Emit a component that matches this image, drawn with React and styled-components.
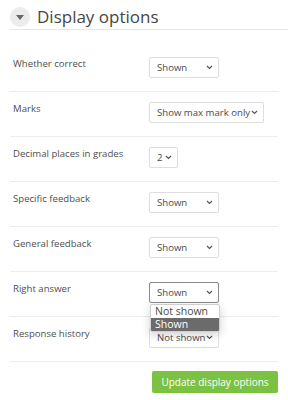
import React from 'react'
import styled, { createGlobalStyle } from 'styled-components'

const GlobalStyle = createGlobalStyle`
    html, body {
        margin: 0;
        padding: 0;
        background: #fff;
        font-family: "Open Sans", "Liberation Sans", sans-serif;
    }
`;

const rows = [
    { label: 'Whether correct', value: 'Shown', width: 70 },
    { label: 'Marks', value: 'Show max mark only', width: 115 },
    { label: 'Decimal places in grades', value: '2', width: 29 },
    { label: 'Specific feedback', value: 'Shown', width: 70 },
    { label: 'General feedback', value: 'Shown', width: 70 },
    { label: 'Right answer', value: 'Shown', width: 70, focused: true, open: ['Not shown', 'Shown'] },
    { label: 'Response history', value: 'Not shown', width: 70 },
]

const Chevron = () => (
    <svg width="7" height="5" viewBox="0 0 7 5">
        <path d="M1 1l2.5 2.5L6 1" fill="none" stroke="#555" strokeWidth="1.2" />
    </svg>
)

const App = () => {
    return (
        <>
            <GlobalStyle />
            <Panel>
                <Header>
                    <Toggle>
                        <svg width="8" height="5" viewBox="0 0 8 5">
                            <path d="M0 0h8L4 5z" fill="#666" />
                        </svg>
                    </Toggle>
                    <Title>Display options</Title>
                </Header>
                <Rows>
                    {rows.map((r) => (
                        <Row key={r.label}>
                            <Label>{r.label}</Label>
                            <SelectWrap>
                                <Select $w={r.width} $focused={r.focused}>
                                    <span>{r.value}</span>
                                    <Chevron />
                                </Select>
                                {r.open && (
                                    <Menu>
                                        {r.open.map((o) => (
                                            <Option key={o} $active={o === r.value}>{o}</Option>
                                        ))}
                                    </Menu>
                                )}
                            </SelectWrap>
                        </Row>
                    ))}
                </Rows>
                <Footer>
                    <Button>Update display options</Button>
                </Footer>
            </Panel>
        </>
    )
}

export default App

const Panel = styled.div`
    width: 288px;
    height: 400px;
    overflow: hidden;
    padding-top: 7px;
    box-sizing: border-box;
`;

const Header = styled.div`
    display: flex;
    align-items: center;
    gap: 7px;
    margin-left: 10px;
    padding-bottom: 2px;
    border-bottom: 1px solid #e6e6e6;
`;

const Toggle = styled.div`
    width: 20px;
    height: 20px;
    border-radius: 50%;
    background: #ececec;
    display: flex;
    align-items: center;
    justify-content: center;
`;

const Title = styled.h2`
    margin: 0;
    font-size: 17px;
    font-weight: 400;
    color: #464646;
    line-height: 20px;
`;

const Rows = styled.div`
    margin: 17px 10px 0 10px;
`;

const Row = styled.div`
    display: grid;
    grid-template-columns: 136px 1fr;
    padding: 10px 0 13px 3px;
    border-bottom: 1px solid #ececec;
`;

const Label = styled.div`
    font-size: 9.6px;
    color: #4f4f4f;
    padding-top: 1px;
    line-height: 12px;
    white-space: nowrap;
`;

const SelectWrap = styled.div`
    position: relative;
`;

const Select = styled.div`
    width: ${(p) => p.$w}px;
    height: 21px;
    box-sizing: border-box;
    border: 1px solid ${(p) => (p.$focused ? '#8a8a8a' : '#dedede')};
    border-radius: 2px;
    display: flex;
    align-items: center;
    justify-content: space-between;
    padding: 0 5px 0 7px;
    font-size: 9.6px;
    color: #4a4a4a;
    background: #fff;
    white-space: nowrap;
    overflow: hidden;
`;

const Menu = styled.div`
    position: absolute;
    top: 22px;
    left: 1px;
    width: 68px;
    background: #fff;
    border: 1px solid #cfcfcf;
    border-radius: 2px;
    box-shadow: 0 3px 10px rgba(0, 0, 0, 0.18);
    z-index: 2;
    overflow: hidden;
`;

const Option = styled.div`
    font-size: 10.5px;
    line-height: 13px;
    padding: 0 0 0 4px;
    white-space: nowrap;
    color: ${(p) => (p.$active ? '#fff' : '#4a4a4a')};
    background: ${(p) => (p.$active ? '#6b6b6b' : 'transparent')};
`;

const Footer = styled.div`
    display: flex;
    justify-content: flex-end;
    padding: 9px 10px 0 0;
`;

const Button = styled.button`
    background: #7cc242;
    border: none;
    border-radius: 2px;
    color: #fff;
    font-family: "Open Sans", "Liberation Sans", sans-serif;
    font-size: 10px;
    height: 22px;
    width: 126px;
    padding: 0;
`;
